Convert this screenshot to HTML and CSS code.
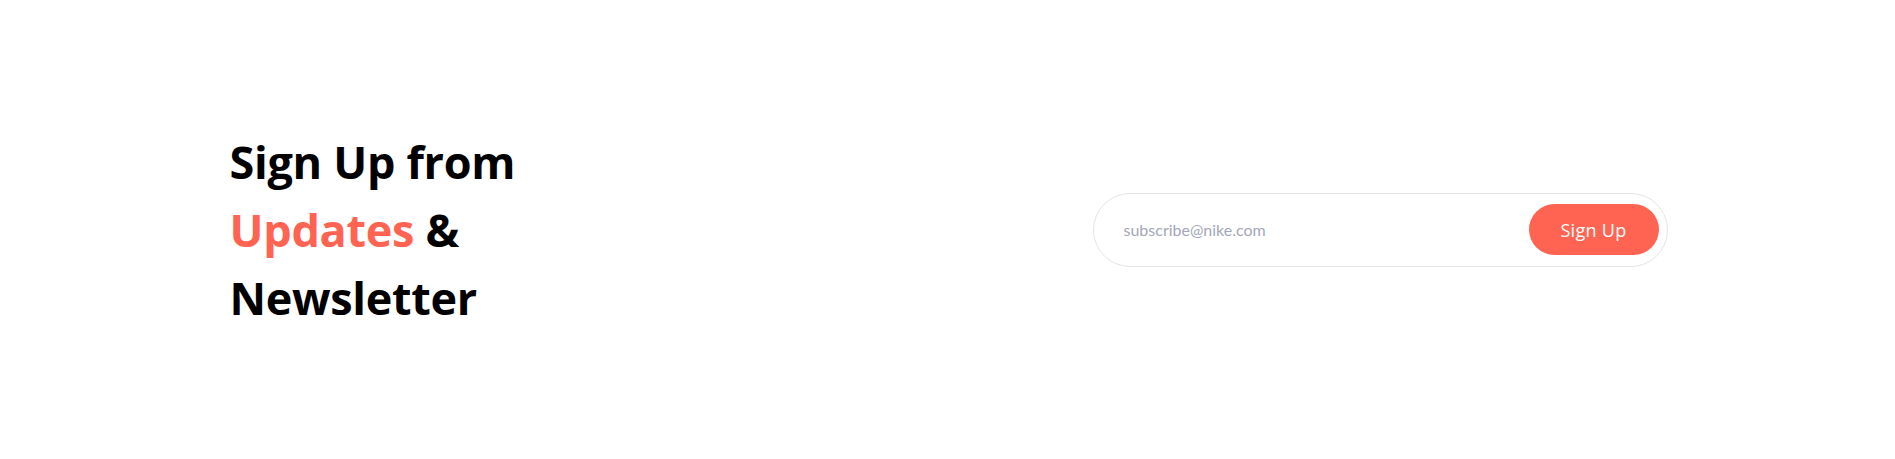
FILE: index.html
```html
<!DOCTYPE html>
<html>
<head>
<meta charset="utf-8">
<link rel="stylesheet" href="styles.css">
</head>
<body>
<section class="newsletter">
  <div class="inner">
    <h2 class="title">Sign Up from<br><span class="accent">Updates</span> &amp;<br>Newsletter</h2>
    <form class="form">
      <input class="email" type="email" placeholder="subscribe@nike.com">
      <button class="btn" type="button">Sign Up</button>
    </form>
  </div>
</section>
</body>
</html>
```

FILE: styles.css
```css
* { box-sizing: border-box; }
html, body { margin: 0; padding: 0; background: #fff; }
.newsletter {
  height: 459px;
  display: flex;
  align-items: center;
  justify-content: center;
}
.inner {
  width: 1440px;
  padding-left: 2px;
  display: flex;
  align-items: center;
  justify-content: space-between;
}
.title {
  margin: 0;
  font-family: "Open Sans", sans-serif;
  font-weight: 700;
  font-size: 45px;
  line-height: 68px;
  color: #000;
  letter-spacing: -0.3px;
}
.accent { color: #ff6452; }
.form {
  width: 575px;
  height: 74px;
  border: 1px solid #e5e5e8;
  border-radius: 37px;
  display: flex;
  align-items: center;
  justify-content: space-between;
  padding: 0 8px 0 30px;
}
.email {
  border: none;
  outline: none;
  background: transparent;
  font-family: "Lato", sans-serif;
  font-size: 16px;
  color: #333;
  flex: 1;
  padding: 0;
}
.email::placeholder { color: #a3a7b9; }
.btn {
  width: 130px;
  height: 51px;
  border: none;
  border-radius: 26px;
  background: #ff6452;
  color: #fff;
  font-family: "Open Sans", sans-serif;
  font-size: 18px;
  letter-spacing: 0.3px;
  font-weight: 400;
  cursor: pointer;
}
```
